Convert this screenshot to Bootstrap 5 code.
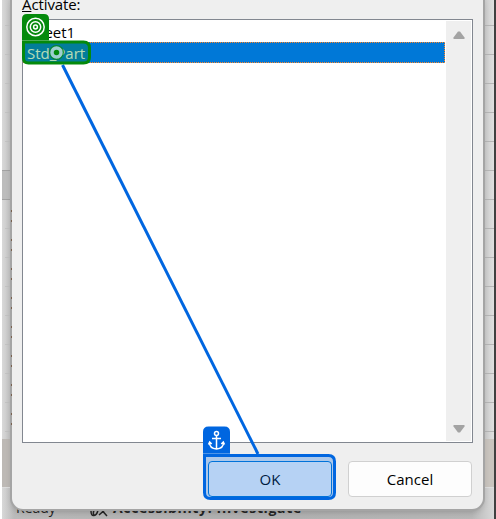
<!DOCTYPE html>
<html lang="en">
<head>
<meta charset="utf-8">
<title>Activate</title>
<link href="https://cdn.jsdelivr.net/npm/bootstrap@5.3.0/dist/css/bootstrap.min.css" rel="stylesheet">
<style>
body{width:496px;height:519px;background:#fff;font-family:"Open Sans","Noto Sans",sans-serif;font-size:15px;color:#000}
.workbook{width:496px;height:519px;background:linear-gradient(90deg,#fff 0 2px,#d9d9d9 2px,#c3c3c3 10px,#a5a5a5 10px 12px,#a8a8a8 12px 485px,#cbcbcb 485px,#e0e0e0 494px,#404040 494px)}
.status{left:2px;top:487px;width:492px;height:32px;background:linear-gradient(90deg,#d8d8d8,#bababa 12px,#b0b0b0 240px,#b8b8b8 470px,#d8d8d8);border-top:1px solid #ddd;color:#262626;font-size:14px;line-height:20px}
.status span,.status svg{position:absolute;top:10px;white-space:nowrap}
.access{letter-spacing:.65px}
.dialog{left:12px;top:0;width:471px;height:509px;background:#efefef;border-radius:0 0 11px 11px;box-shadow:0 0 0 2px #a5a5a5,0 3px 6px rgba(0,0,0,.2);padding:0 10px}
.caption{height:19px;line-height:9px;letter-spacing:-.1px}
.listing{width:451px;height:424px;border:1px solid #828790;background:#fff}
.entries{width:423px;padding-top:1px}
.entry{height:21px;line-height:23px;padding-left:4px;white-space:pre}
.chosen{background:#0078d7;color:#fff;outline:1px dotted #ff8728;outline-offset:-1px}
.scroller{width:25px;height:420px;margin:1px;background:#efefef;padding:10px 0 8px}
.actions{margin-top:18px;gap:16px;padding-right:1px}
.choice{width:124px;height:36px;border:1px solid #d0d0d0;border-radius:4px;background:#fdfdfd;padding:0;font-size:15px;line-height:34px;color:#000}
.choice.primary{border-color:#0078d7}
.markers{left:0;top:0;pointer-events:none}
</style>
</head>
<body class="m-0 overflow-hidden">
<main class="workbook position-relative overflow-hidden">
  <svg class="position-absolute top-0 start-0" width="496" height="519" aria-hidden="true">
    <defs><pattern id="rules" width="12" height="29" patternUnits="userSpaceOnUse" y="25"><path d="M0 .5h12" stroke="#b6b6b6"/></pattern>
    <pattern id="faint" width="12" height="29" patternUnits="userSpaceOnUse" y="25"><path d="M0 .5h12" stroke="#c2c2c2"/></pattern></defs>
    <rect x="5" width="5" height="439" fill="url(#faint)"/>
    <rect x="483" width="11" height="432" fill="url(#rules)"/>
    <rect x="2" y="170" width="8" height="29" fill="#bcbcbc"/><path d="M2 170.500h8M2 199.500h8" stroke="#a2a2a2"/>
    <rect x="2" y="439" width="8" height="48" fill="#bdb9b5"/><rect x="485" y="439" width="9" height="48" fill="#c9c4be"/>
  </svg>
  <div class="status position-absolute">
    <span style="left:14px">Ready</span>
    <svg style="left:86px" width="24" height="20"><path d="M3 13q0 5 3 4.500t4-5.500M6 17q-2-3 2-7M11 17l9-8M11 9l8 9" fill="none" stroke="#262626" stroke-width="1.500"/></svg>
    <span class="access fw-bold" style="left:111px">Accessibility: Investigate</span>
  </div>
  <section class="dialog position-absolute">
    <div class="caption"><u>A</u>ctivate:</div>
    <div class="listing d-flex justify-content-between">
      <div class="entries"><div class="entry">Sheet1</div><div class="entry chosen">Std_Part</div></div>
      <div class="scroller d-flex flex-column align-items-center justify-content-between flex-shrink-0">
        <svg width="12" height="9"><path d="M5 .5h2l4.500 6v1.500H.5V6.500z" fill="#a3a3a3"/></svg>
        <svg width="12" height="9"><path d="M.5 1h11v1.500l-4.500 6H5l-4.500-6z" fill="#a3a3a3"/></svg>
      </div>
    </div>
    <div class="actions d-flex justify-content-end">
      <button class="btn choice primary">OK</button><button class="btn choice">Cancel</button>
    </div>
  </section>
  <svg class="markers position-absolute" width="496" height="519" aria-hidden="true">
    <path d="M11.500 210v2m0 8v2m0 17v2m0 8v2m0 17v2m0 8v2m0 17v2m0 8v2m0 17v2m0 8v2m0 17v2m0 8v2m0 17v2m0 8v2m0 17v2m0 8v2" stroke="#79604d"/>
    <path d="M62.500 65L258 454" stroke="#0066e0" stroke-width="3"/>
    <path d="M22 43V19q0-5 5-5h17q5 0 5 5v24z" fill="#058a0c"/>
    <g fill="none" stroke="#fff" stroke-width="1.500"><circle cx="35.500" cy="27" r="8.700"/><circle cx="35.500" cy="27" r="5.200"/><circle cx="35.500" cy="27" r="1.900"/></g>
    <path d="M23.500 42h60q6 0 6 6v9q0 6-6 6h-55q-5 0-5-5z" fill="#058a0c" fill-opacity=".3" stroke="#058a0c" stroke-width="3"/>
    <path d="M22 40.500h27" stroke="#4cae55"/>
    <circle cx="56.500" cy="52.500" r="7.500" fill="#058a0c" fill-opacity=".75"/>
    <circle cx="56.500" cy="52.500" r="4.500" fill="#058a0c" stroke="#9dcfd0" stroke-width="3.500"/>
    <path d="M203 456v-24q0-5.500 5.500-5.500h16q5.500 0 5.500 5.500v24z" fill="#0066e0"/>
    <path d="M204.500 455.500h124q6 0 6 6v31q0 6-6 6h-118q-6 0-6-6z" fill="#0066e0" fill-opacity=".28" stroke="#0066e0" stroke-width="3"/>
    <path d="M203 453.500h27" stroke="#4d94e9"/>
    <g fill="none" stroke="#fff" stroke-width="1.500"><circle cx="216.500" cy="433.500" r="2"/><path d="M216.500 436v12.500M212 438.500h9M209.500 442.500q0 6 7 6.500 7-.5 7-6.500M208.500 444.500l1.200-2.500 2 2M224.500 444.500l-1.200-2.500-2 2"/></g>
  </svg>
</main>
<script src="https://cdn.jsdelivr.net/npm/bootstrap@5.3.0/dist/js/bootstrap.bundle.min.js"></script>
</body>
</html>
